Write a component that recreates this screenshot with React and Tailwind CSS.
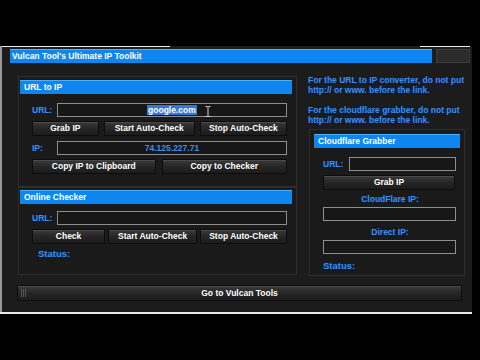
// Vulcan Tool's Ultimate IP Toolkit — dark skinned WinForms style window.

import React from 'react';

const FONT = { fontFamily: '"Liberation Sans", Arial, sans-serif' };

function Btn({ w, children, className = '' }) {
  return (
    <div
      className={
        'h-[15px] flex items-center justify-center text-[8.5px] font-bold text-white ' +
        'bg-gradient-to-b from-[#3a3a3a] via-[#262626] to-[#1c1c1c] border border-[#0c0c0c] ' +
        'rounded-[1px] shadow-[inset_0_1px_0_#4a4a4a] ' +
        className
      }
      style={{ width: w }}
    >
      {children}
    </div>
  );
}

function Field({ w, children, className = '' }) {
  return (
    <div
      className={
        'h-[14px] bg-[#171717] border border-[#8e8e8e] flex items-center justify-center ' +
        'text-[8.5px] font-bold ' +
        className
      }
      style={{ width: w }}
    >
      {children}
    </div>
  );
}

function Label({ children, className = '' }) {
  return (
    <span
      className={
        'text-[8.5px] font-bold text-[#3b8ff0] [text-shadow:0_0_2px_#0a2a66] ' + className
      }
    >
      {children}
    </span>
  );
}

function Header({ children, className = '' }) {
  return (
    <div
      className={
        'h-[14px] bg-[#0e86ee] text-white text-[8.5px] font-bold flex items-center px-[4px] ' +
        'shadow-[inset_0_1px_0_#4fb0ff] ' +
        className
      }
    >
      {children}
    </div>
  );
}

export default function App() {
  return (
    <div className="w-[480px] h-[360px] bg-black overflow-hidden flex flex-col" style={FONT}>
      <div className="h-[46px]" />

      {/* window */}
      <div className="w-[472px] h-[268px] bg-[#1c1c1c] border-l-[2px] border-[#9a9a9a] flex flex-col relative">
        {/* top edge, partly lit */}
        <div className="flex h-[1px]">
          <div className="w-[168px] bg-[#e8e8e8]" />
          <div className="w-[250px]" />
          <div className="w-[50px] bg-[#e8e8e8]" />
        </div>

        {/* title row */}
        <div className="flex mt-[2px] h-[14px]">
          <div className="ml-[8px] w-[422px] bg-[#0e86ee] text-white text-[8.5px] font-bold flex items-center px-[2px] shadow-[inset_0_1px_0_#4fb0ff]">
            Vulcan Tool's Ultimate IP Toolkit
          </div>
          <div className="ml-[4px] w-[34px] bg-[#2b2b2b] border border-[#3c3c3c]" />
        </div>

        {/* body */}
        <div className="flex mt-[13px]">
          {/* left column */}
          <div className="ml-[16px] w-[279px] flex flex-col">
            {/* URL to IP */}
            <div className="h-[111px] border border-[#2e2e2e] bg-[#1a1a1a] pt-[3px] pl-[1px] pr-[4px]">
              <Header>URL to IP</Header>
              <div className="pl-[12px] pr-[5px] flex flex-col">
                <div className="flex items-center mt-[9px]">
                  <Label className="w-[25px]">URL:</Label>
                  <Field w={231} className="relative">
                    <span className="bg-[#3278d8] text-white px-[1px] leading-[10px]">google.com</span>
                    <svg className="absolute left-[147px] top-[2px]" width="6" height="11" viewBox="0 0 6 11">
                      <path d="M0.5 0.5h2M3.5 0.5h2M3 0.5v10M0.5 10.5h2M3.5 10.5h2" stroke="#d8d8d8" strokeWidth="1" fill="none" />
                    </svg>
                  </Field>
                </div>
                <div className="flex mt-[4px] gap-[5px]">
                  <Btn w={68}>Grab IP</Btn>
                  <Btn w={93}>Start Auto-Check</Btn>
                  <Btn w={89}>Stop Auto-Check</Btn>
                </div>
                <div className="flex items-center mt-[5px]">
                  <Label className="w-[25px]">IP:</Label>
                  <Field w={231} className="text-[#3b8ff0]">74.125.227.71</Field>
                </div>
                <div className="flex mt-[4px] gap-[6px]">
                  <Btn w={124}>Copy IP to Clipboard</Btn>
                  <Btn w={126}>Copy to Checker</Btn>
                </div>
              </div>
            </div>

            {/* Online Checker */}
            <div className="h-[88px] border border-[#2e2e2e] border-t-[#3a2238] bg-[#1a1a1a] pt-[2px] pl-[1px] pr-[4px]">
              <Header>Online Checker</Header>
              <div className="pl-[12px] pr-[5px] flex flex-col">
                <div className="flex items-center mt-[7px]">
                  <Label className="w-[25px]">URL:</Label>
                  <Field w={231} />
                </div>
                <div className="flex mt-[4px] gap-[3px]">
                  <Btn w={74}>Check</Btn>
                  <Btn w={90}>Start Auto-Check</Btn>
                  <Btn w={88}>Stop Auto-Check</Btn>
                </div>
                <Label className="mt-[3px] ml-[6px] text-[9.5px]">Status:</Label>
              </div>
            </div>
          </div>

          {/* right column */}
          <div className="ml-[10px] w-[160px] flex flex-col">
            <div className="pl-[1px] text-[8.5px] font-bold text-[#3b8ff0] leading-[9.5px] [text-shadow:0_0_2px_#0a2a66]">
              <p>For the URL to IP converter, do not put</p>
              <p>http:// or www. before the link.</p>
              <p className="mt-[11px]">For the cloudflare grabber, do not put</p>
              <p>http:// or www. before the link.</p>
            </div>

            <div className="mt-[4px] ml-[2px] w-[156px] h-[147px] border border-[#2e2e2e] bg-[#1a1a1a] pt-[4px] px-[4px]">
              <Header>Cloudflare Grabber</Header>
              <div className="pl-[9px] pr-[3px] flex flex-col">
                <div className="flex items-center mt-[9px]">
                  <Label className="w-[26px]">URL:</Label>
                  <Field w={107} />
                </div>
                <Btn w={132} className="mt-[4px]">Grab IP</Btn>
                <Label className="mt-[3px] self-center">CloudFlare IP:</Label>
                <Field w={133} className="mt-[1px]" />
                <Label className="mt-[5px] self-center">Direct IP:</Label>
                <Field w={133} className="mt-[1px]" />
                <Label className="mt-[5px] text-[9.5px]">Status:</Label>
              </div>
            </div>
          </div>
        </div>

        {/* bottom button */}
        <div className="mt-[9px] ml-[15px] w-[445px] h-[16px] flex items-center bg-gradient-to-b from-[#3a3a3a] via-[#262626] to-[#1c1c1c] border border-[#0c0c0c] shadow-[inset_0_1px_0_#4a4a4a] relative">
          <div className="absolute left-[3px] top-[3px] flex gap-[1px]">
            <div className="w-[1px] h-[8px] bg-[#555]" />
            <div className="w-[1px] h-[8px] bg-[#555]" />
            <div className="w-[1px] h-[8px] bg-[#555]" />
          </div>
          <span className="flex-1 text-center text-[8.5px] font-bold text-white">Go to Vulcan Tools</span>
        </div>

        <div className="flex-1" />
        <div className="h-[2px] bg-[#e8e8e8] -ml-[2px]" />
      </div>
    </div>
  );
}
